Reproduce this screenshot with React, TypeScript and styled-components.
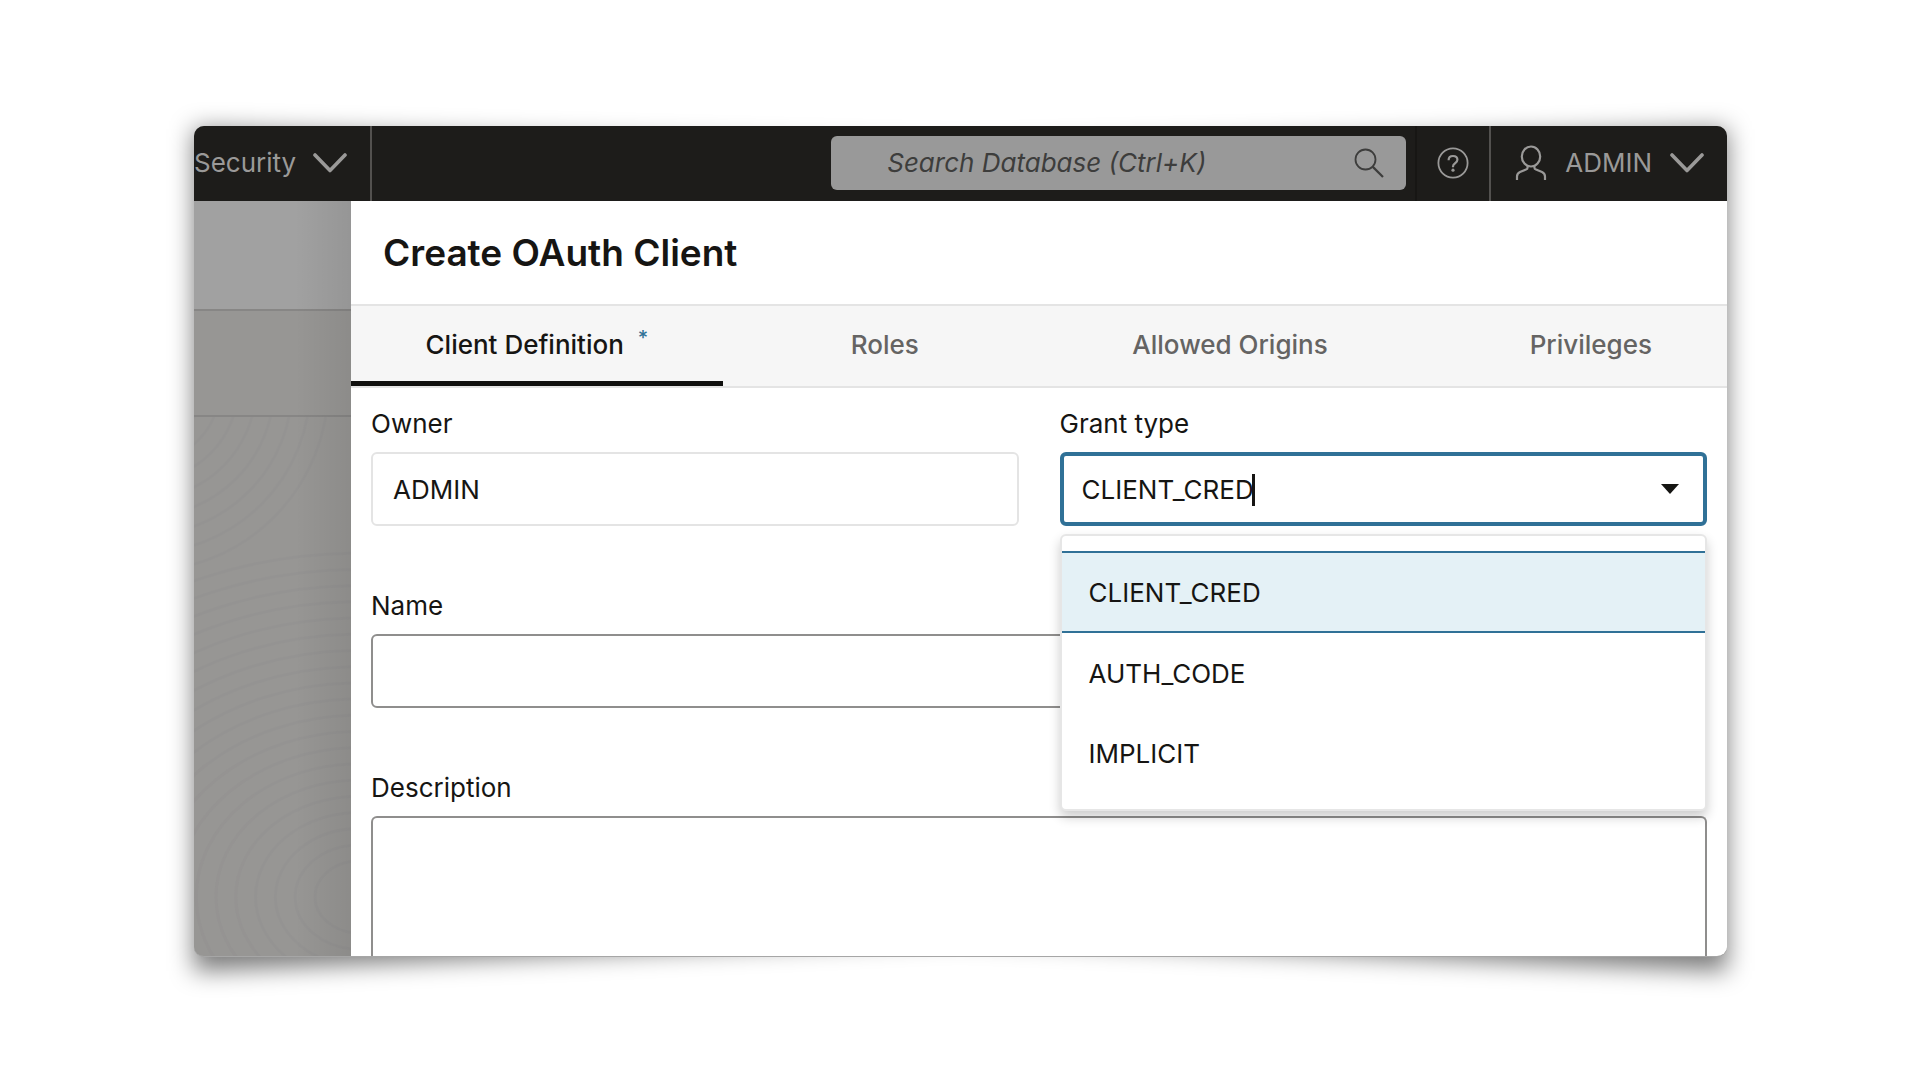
import React, { useState } from "react";
import styled, { createGlobalStyle } from "styled-components";

const ink = "#161513";
const accent = "#307197";
const mutedOnDark = "#9a9998";

const GlobalStyle = createGlobalStyle`
  *, *::before, *::after { box-sizing: border-box; }
  body {
    margin: 0;
    background: #ffffff;
    color: ${ink};
    font-family: Inter, "Liberation Sans", sans-serif;
    font-size: 26px;
    line-height: 34px;
  }
  button, input, textarea { font: inherit; color: inherit; }
`;

const Stage = styled.main`
  display: flex;
  min-height: 100vh;
  padding: 126px 193px 125px 194px;
`;

const Frame = styled.div`
  position: relative;
  display: flex;
  flex: 1;
  min-width: 0;
`;

/* Lifted-corner shadow: the blurred sheet bows inwards at top and bottom. */
const Shadow = styled.div`
  position: absolute;
  inset: 3px 0 -14px;
  filter: blur(12px);

  &::before {
    content: "";
    position: absolute;
    inset: 0;
    background: rgba(0, 0, 0, 0.52);
    clip-path: polygon(0 0, 50% 20px, 100% 0, 100% 100%, 50% calc(100% - 34px), 0 100%);
  }
`;

const Window = styled.div`
  position: relative;
  display: flex;
  flex-direction: column;
  flex: 1;
  min-width: 0;
  overflow: hidden;
  border-radius: 10px;
  border-bottom: 1px solid #a6a6a6;
  background: #979694;
`;

const TopBar = styled.header`
  display: flex;
  align-items: stretch;
  height: 75px;
  background: #1d1c1a;
  color: ${mutedOnDark};
`;

const BarButton = styled.button<{ $pad: string; $gap?: number; $line?: string }>`
  display: flex;
  align-items: center;
  gap: ${(p) => p.$gap ?? 0}px;
  padding: ${(p) => p.$pad};
  border: 0;
  border-left: ${(p) => (p.$line ? `2px solid ${p.$line}` : "0")};
  background: none;
`;

const SearchArea = styled.div`
  display: flex;
  flex: 1;
  align-items: center;
  justify-content: flex-end;
  padding: 0 9px 2px 10px;
  border-left: 2px solid #53514f;
`;

const SearchBox = styled.label`
  display: flex;
  align-items: center;
  width: 575px;
  height: 54px;
  padding: 0 22px 0 56px;
  border-radius: 6px;
  background: #999999;
  color: #3d3d3c;
`;

const SearchInput = styled.input`
  flex: 1;
  min-width: 0;
  padding: 0;
  border: 0;
  outline: 0;
  background: none;
  font-style: italic;

  &::placeholder { color: #3d3d3c; opacity: 1; }
`;

const Body = styled.div`
  display: flex;
  flex: 1;
  min-height: 0;
`;

const Backdrop = styled.aside`
  position: relative;
  display: flex;
  flex-direction: column;
  width: 157px;
  flex: none;

  &::after {
    content: "";
    position: absolute;
    inset: 0 0 0 auto;
    width: 56px;
    background: linear-gradient(to right, rgba(0, 0, 0, 0), rgba(0, 0, 0, 0.07));
  }
`;

const BackdropBand = styled.div<{ $height: number; $color: string }>`
  height: ${(p) => p.$height}px;
  flex: none;
  border-bottom: 2px solid #878685;
  background: ${(p) => p.$color};
`;

const Pattern = styled.svg`
  display: block;
  width: 100%;
  flex: 1;
  min-height: 0;
`;

const Panel = styled.section`
  display: flex;
  flex-direction: column;
  flex: 1;
  min-width: 0;
  background: #ffffff;
`;

const PanelHeader = styled.div`
  display: flex;
  align-items: center;
  height: 105px;
  flex: none;
  padding: 0 32px;
  border-bottom: 2px solid #e4e4e4;
`;

const Title = styled.h1`
  margin: 0;
  font-size: 37px;
  line-height: 48px;
  font-weight: 600;
`;

const TabStrip = styled.div`
  flex: none;
  overflow: hidden;
  border-bottom: 2px solid #e4e4e4;
  background: #f6f6f6;
`;

/* The last tab runs past the edge of the strip. */
const TabList = styled.div`
  display: grid;
  grid-template-columns: 372fr 324fr 367fr 355fr;
  width: 103%;
`;

const Tab = styled.button<{ $active?: boolean }>`
  display: flex;
  justify-content: center;
  gap: 14px;
  height: 80px;
  padding: 22px 0 0;
  border: 0;
  border-bottom: 5px solid ${(p) => (p.$active ? "#10100e" : "transparent")};
  background: none;
  color: ${(p) => (p.$active ? ink : "#656463")};
  font-weight: 500;
`;

const Required = styled.sup`
  color: ${accent};
  font-size: 20px;
  line-height: 20px;
`;

const Form = styled.form`
  display: grid;
  grid-template-columns: 1fr 1fr;
  grid-template-rows: auto auto 1fr;
  gap: 63px 41px;
  flex: 1;
  padding: 19px 20px 0;
`;

const Field = styled.div<{ $wide?: boolean }>`
  position: relative;
  display: flex;
  flex-direction: column;
  gap: 11px;
  min-width: 0;
  grid-column: ${(p) => (p.$wide ? "1 / -1" : "auto")};
`;

const TextInput = styled.input<{ $quiet?: boolean }>`
  width: 100%;
  height: 74px;
  padding: 0 20px;
  border: 2px solid ${(p) => (p.$quiet ? "#e4e4e4" : "#8f8e8d")};
  border-radius: 6px;
  outline: 0;
  background: #ffffff;
`;

const TextArea = styled.textarea`
  flex: 1;
  width: 100%;
  min-height: 140px;
  padding: 20px;
  border: 2px solid #8f8e8d;
  border-bottom: 0;
  border-radius: 6px 6px 0 0;
  outline: 0;
  resize: none;
  background: #ffffff;
`;

const Combo = styled.div`
  display: flex;
  align-items: center;
  height: 74px;
  padding: 2px 24px 0 18px;
  border: 4px solid ${accent};
  border-radius: 6px;
`;

const ComboInput = styled.input`
  field-sizing: content;
  padding: 0;
  border: 0;
  outline: 0;
  background: none;
  caret-color: transparent;
`;

const Caret = styled.span`
  width: 3px;
  height: 32px;
  margin-left: -2px;
  background: ${ink};
`;

const ComboToggle = styled.button`
  display: flex;
  margin-left: auto;
  padding: 0 0 2px;
  border: 0;
  background: none;
`;

const Options = styled.ul`
  position: absolute;
  top: 127px;
  left: 0;
  right: 0;
  z-index: 1;
  margin: 0;
  padding: 15px 0 16px;
  border: 2px solid #e6e6e6;
  border-radius: 6px;
  background: #ffffff;
  box-shadow: 0 6px 12px rgba(0, 0, 0, 0.2);
  list-style: none;
`;

const Option = styled.li<{ $selected?: boolean }>`
  display: flex;
  align-items: center;
  height: ${(p) => (p.$selected ? 82 : 80)}px;
  padding: 2px 27px 0;
  border: solid ${(p) => (p.$selected ? accent : "transparent")};
  border-width: ${(p) => (p.$selected ? "2px 0" : "0")};
  background: ${(p) => (p.$selected ? "#e4f1f6" : "none")};
`;

const ChevronDown = () => (
  <svg width="34" height="20" viewBox="0 0 34 20" fill="none" stroke="currentColor" strokeWidth="3.6" aria-hidden="true">
    <path d="M2 2 17 17.5 32 2" strokeLinecap="round" strokeLinejoin="round" />
  </svg>
);

const SearchIcon = () => (
  <svg width="30" height="30" viewBox="0 0 30 30" fill="none" stroke="currentColor" strokeWidth="1.8" aria-hidden="true">
    <circle cx="11.5" cy="11.5" r="10" />
    <path d="M18.6 18.6 29 29" strokeWidth="2.2" />
  </svg>
);

const HelpIcon = () => (
  <svg width="32" height="32" viewBox="0 0 32 32" fill="none" stroke="currentColor" strokeWidth="1.8" aria-hidden="true">
    <circle cx="16" cy="16" r="14.6" />
    <path d="M11.6 13.2c0-2.7 1.800-4.200 4.400-4.200s4.400 1.500 4.400 3.700c0 1.700-.9 2.600-2.300 3.500-1.500 1-2.100 1.600-2.100 3.200v.8" strokeWidth="2.200" />
    <circle cx="16" cy="23.200" r="1.600" fill="currentColor" stroke="none" />
  </svg>
);

const UserIcon = () => (
  <svg width="32" height="36" viewBox="0 0 32 36" fill="none" stroke="currentColor" strokeWidth="2.2" aria-hidden="true">
    <ellipse cx="16" cy="11.500" rx="9.200" ry="10" />
    <path d="M12.600 21v1.400c0 1-.6 1.800-1.600 2.200l-6 2.400c-2 .9-3 2.200-3 4.400V35M19.400 21v1.400c0 1 .6 1.800 1.600 2.200l6 2.400c2 .9 3 2.200 3 4.400V35" />
  </svg>
);

const rings = Array.from({ length: 20 }, (_, i) => 40 + i * 18);

const BackdropPattern = () => (
  <Pattern viewBox="0 0 157 539" preserveAspectRatio="xMidYMid slice" fill="none" strokeWidth="3" aria-hidden="true">
    <g stroke="#8f8e8f" opacity="0.28">
      {rings.map((r) => (
        <ellipse key={r} cx="165" cy="480" rx={r * 1.1} ry={r * 0.9} />
      ))}
    </g>
    <g stroke="#8f8e8f" opacity="0.25">
      {rings.slice(0, 9).map((r) => (
        <circle key={r} cx="-50" cy="-30" r={r} />
      ))}
    </g>
  </Pattern>
);

const tabs = ["Client Definition", "Roles", "Allowed Origins", "Privileges"];
const grantTypes = ["CLIENT_CRED", "AUTH_CODE", "IMPLICIT"];

export default function App() {
  const [tab, setTab] = useState(tabs[0]);
  const [grant, setGrant] = useState(grantTypes[0]);

  return (
    <Stage>
      <GlobalStyle />
      <Frame>
        <Shadow />
        <Window>
          <TopBar>
            <BarButton $pad="0 23px 2px 0" $gap={17}>
              Security
              <ChevronDown />
            </BarButton>
            <SearchArea>
              <SearchBox>
                <SearchInput type="search" aria-label="Search Database" placeholder="Search Database (Ctrl+K)" />
                <SearchIcon />
              </SearchBox>
            </SearchArea>
            <BarButton $pad="0 20px 2px" $line="#171614" aria-label="Help">
              <HelpIcon />
            </BarButton>
            <BarButton $pad="0 23px 2px 24px" $gap={18} $line="#53514f">
              <UserIcon />
              ADMIN
              <ChevronDown />
            </BarButton>
          </TopBar>
          <Body>
            <Backdrop>
              <BackdropBand $height={110} $color="#a1a1a1" />
              <BackdropBand $height={106} $color="#979694" />
              <BackdropPattern />
            </Backdrop>
            <Panel>
              <PanelHeader>
                <Title>Create OAuth Client</Title>
              </PanelHeader>
              <TabStrip>
                <TabList role="tablist">
                  {tabs.map((name, i) => (
                    <Tab key={name} role="tab" aria-selected={tab === name} $active={tab === name} onClick={() => setTab(name)}>
                      {name}
                      {i === 0 && <Required>*</Required>}
                    </Tab>
                  ))}
                </TabList>
              </TabStrip>
              <Form onSubmit={(e) => e.preventDefault()}>
                <Field>
                  <label htmlFor="owner">Owner</label>
                  <TextInput id="owner" $quiet readOnly value="ADMIN" />
                </Field>
                <Field>
                  <label htmlFor="grant">Grant type</label>
                  <Combo>
                    <ComboInput
                      id="grant"
                      role="combobox"
                      aria-expanded="true"
                      aria-controls="grant-options"
                      value={grant}
                      onChange={(e) => setGrant(e.target.value)}
                    />
                    <Caret />
                    <ComboToggle type="button" aria-label="Show grant types">
                      <svg width="18" height="10" viewBox="0 0 18 10" aria-hidden="true">
                        <path d="M0 0h18L9 10z" fill="currentColor" />
                      </svg>
                    </ComboToggle>
                  </Combo>
                  <Options id="grant-options" role="listbox">
                    {grantTypes.map((g) => (
                      <Option key={g} role="option" aria-selected={g === grant} $selected={g === grant} onClick={() => setGrant(g)}>
                        {g}
                      </Option>
                    ))}
                  </Options>
                </Field>
                <Field $wide>
                  <label htmlFor="name">Name</label>
                  <TextInput id="name" />
                </Field>
                <Field $wide>
                  <label htmlFor="description">Description</label>
                  <TextArea id="description" />
                </Field>
              </Form>
            </Panel>
          </Body>
        </Window>
      </Frame>
    </Stage>
  );
}
